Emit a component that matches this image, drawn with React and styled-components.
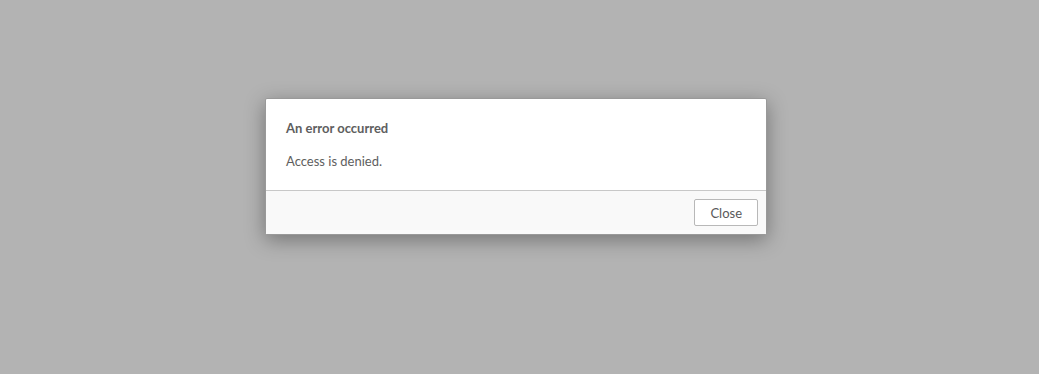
import styled, { createGlobalStyle } from 'styled-components';

const GlobalStyle = createGlobalStyle`
  html, body {
    margin: 0;
    padding: 0;
    height: 100%;
    background: #b3b3b3;
  }
  #root {
    height: 100%;
  }
`;

const Backdrop = styled.div`
  height: 374px;
  display: flex;
  justify-content: center;
  align-items: flex-start;
  padding-top: 98px;
  box-sizing: border-box;
  font-family: Lato, "Open Sans", sans-serif;
`;

const Dialog = styled.div`
  width: 502px;
  background: #fff;
  border: 1px solid #999;
  border-radius: 2px;
  box-shadow: 0 5px 20px rgba(0, 0, 0, 0.35);
  box-sizing: border-box;
  margin-right: 7px;
`;

const Body = styled.div`
  padding: 20px 19px 20px 20px;
`;

const Title = styled.h4`
  margin: 0 0 15px;
  font-size: 13px;
  font-weight: 700;
  line-height: 18px;
  color: #5e5e5e;
`;

const Message = styled.p`
  margin: 0;
  font-size: 13px;
  line-height: 18px;
  color: #5e5e5e;
`;

const Footer = styled.div`
  display: flex;
  justify-content: flex-end;
  padding: 8px 8px 8px;
  background: #f9f9f9;
  border-top: 1px solid #c8c8c8;
`;

const Button = styled.button`
  height: 27px;
  padding: 0 15px;
  font-family: inherit;
  font-size: 13px;
  color: #595959;
  background: #fff;
  border: 1px solid #b8b8b8;
  border-radius: 2px;
  cursor: pointer;
`;

export default function App() {
  return (
    <>
      <GlobalStyle />
      <Backdrop>
        <Dialog>
          <Body>
            <Title>An error occurred</Title>
            <Message>Access is denied.</Message>
          </Body>
          <Footer>
            <Button>Close</Button>
          </Footer>
        </Dialog>
      </Backdrop>
    </>
  );
}
